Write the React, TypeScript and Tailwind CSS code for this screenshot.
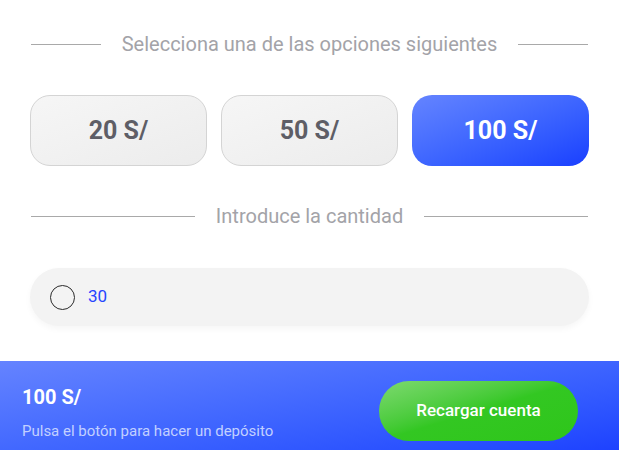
import React, { useState } from "react";

const amounts = [20, 50, 100];

const Divider = ({ label }: { label: string }) => (
	<div className="flex items-center gap-[21px]">
		<div className="h-px flex-1 bg-[#a9a9a9]" />
		<div className="text-[20px] leading-none text-[#a3a3a8]">{label}</div>
		<div className="h-px flex-1 bg-[#a9a9a9]" />
	</div>
);

const App = () => {
	const [selected, setSelected] = useState(100);

	return (
		<div
			className="w-[619px] h-[450px] bg-white flex flex-col overflow-hidden"
			style={{ fontFamily: "Roboto, 'Liberation Sans', sans-serif" }}
		>
			<div className="px-[31px] pt-[34px]">
				<Divider label="Selecciona una de las opciones siguientes" />
			</div>

			<div className="px-[30px] pt-[41px] grid grid-cols-3 gap-[14px]">
				{amounts.map((a) => (
					<button
						key={a}
						onClick={() => setSelected(a)}
						className={
							a === selected
								? "h-[71px] rounded-[20px] bg-gradient-to-br from-[#6584ff] to-[#1a3eff] text-white text-[25px] font-bold"
								: "h-[71px] rounded-[20px] border border-[#d4d4d4] bg-gradient-to-br from-[#f6f6f6] to-[#ececec] text-[#5e5e66] text-[25px] font-bold"
						}
					>
						{a} S/
					</button>
				))}
			</div>

			<div className="px-[31px] pt-[40px]">
				<Divider label="Introduce la cantidad" />
			</div>

			<div className="px-[30px] pt-[42px]">
				<div className="h-[58px] rounded-full bg-[#f3f3f3] shadow-[0_3px_6px_rgba(0,0,0,0.04)] flex items-center pl-[58px] relative">
					<div className="absolute left-[20px] w-[25px] h-[25px] rounded-full border-[1.5px] border-[#2a2a2a]" />
					<span className="text-[17px] text-[#2545ff]">30</span>
				</div>
			</div>

			<div className="mt-[35px] h-[100px] shrink-0 bg-gradient-to-br from-[#6583ff] to-[#1a3cff] flex items-center justify-between pl-[22px] pr-[41px]">
				<div className="flex flex-col pt-[4px]">
					<div className="text-[20px] font-bold text-white leading-none">100 S/</div>
					<div className="mt-[17px] text-[15px] text-[#c2d0ff] leading-none">Pulsa el botón para hacer un depósito</div>
				</div>
				<button className="w-[199px] h-[60px] rounded-full bg-gradient-to-br from-[#7cd96e] via-[#33c722] to-[#2ec61a] text-white text-[17px] font-medium">
					Recargar cuenta
				</button>
			</div>
		</div>
	);
};

export default App;
